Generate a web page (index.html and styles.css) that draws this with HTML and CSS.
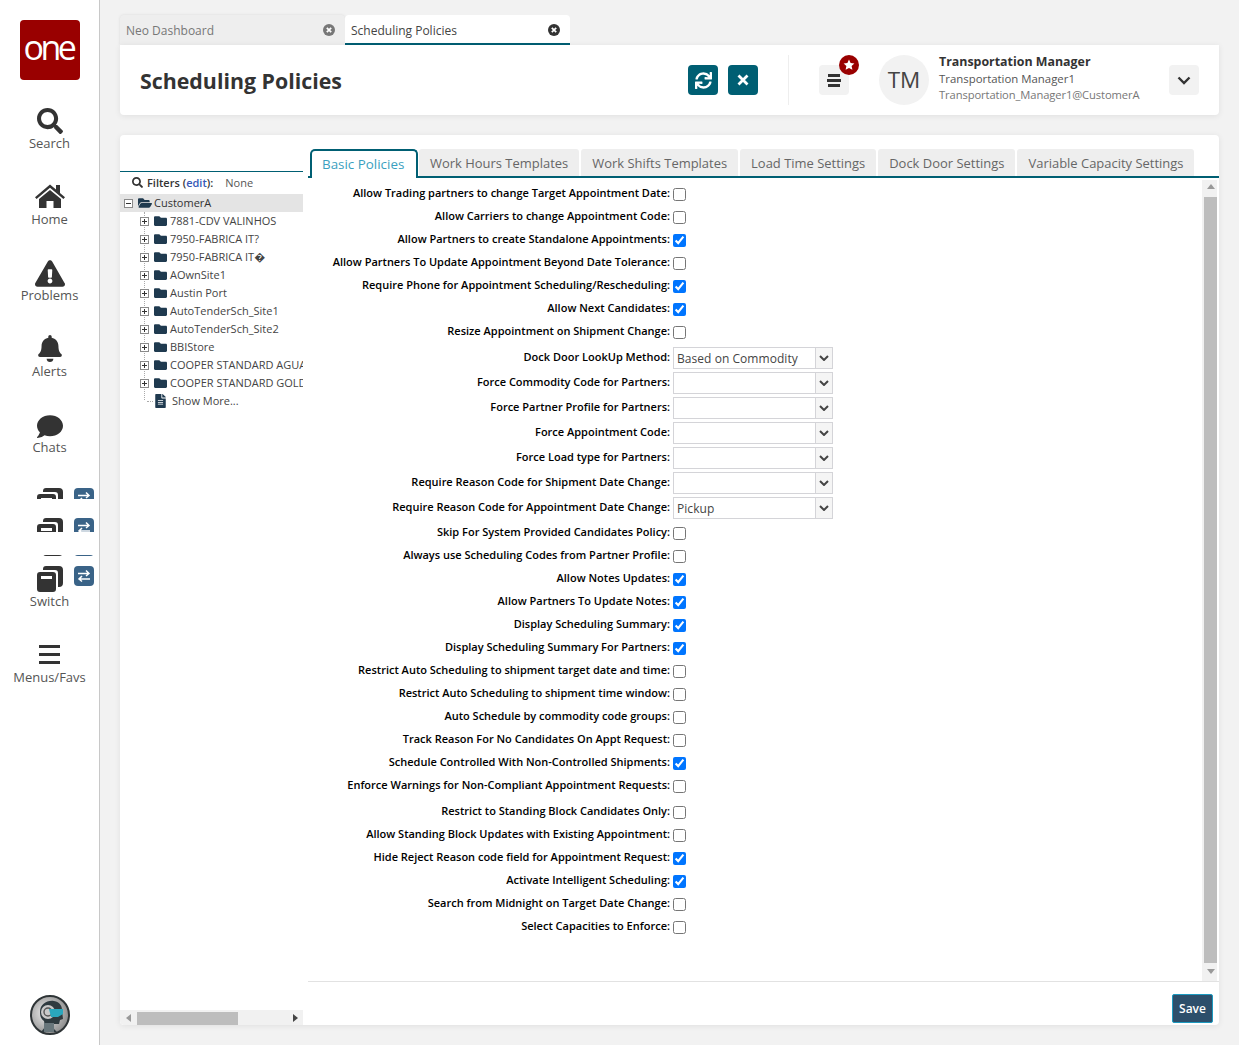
FILE: index.html
```html
<!DOCTYPE html>
<html lang="en">
<head>
<meta charset="utf-8">
<title>Scheduling Policies</title>
<link rel="stylesheet" href="styles.css">
</head>
<body>
<svg class="defs" aria-hidden="true">
  <symbol id="i-search" viewBox="0 0 512 512"><path d="M505 442.7L405.3 343c-4.5-4.5-10.6-7-17-7H372c27.6-35.3 44-79.7 44-128C416 93.1 322.9 0 208 0S0 93.1 0 208s93.1 208 208 208c48.3 0 92.7-16.4 128-44v16.3c0 6.4 2.5 12.5 7 17l99.7 99.7c9.4 9.4 24.6 9.4 33.9 0l28.3-28.3c9.4-9.4 9.4-24.6.1-34zM208 336c-70.7 0-128-57.2-128-128 0-70.7 57.2-128 128-128 70.7 0 128 57.2 128 128 0 70.7-57.2 128-128 128z"/></symbol>
  <symbol id="i-home" viewBox="0 0 30 24"><path d="M15 0.5 L21 5.6 V1 H25 V9 L30 13.2 L28.4 15 L15 3.8 L1.6 15 L0 13.2 Z"/><path d="M15 6 L26 15 V24 H18.5 V17 H11.5 V24 H4 V15 Z"/></symbol>
  <symbol id="i-warn" viewBox="0 0 576 512"><path d="M569.517 440.013C587.975 472.007 564.806 512 527.94 512H48.054c-36.937 0-59.999-40.055-41.577-71.987L246.423 24.035c18.467-32.009 64.72-31.951 83.154 0l239.94 416.978zM288 354c-25.405 0-46 20.595-46 46s20.595 46 46 46 46-20.595 46-46-20.595-46-46-46zm-43.673-165.346l7.418 136c.347 6.364 5.609 11.346 11.982 11.346h48.546c6.373 0 11.635-4.982 11.982-11.346l7.418-136c.375-6.874-5.098-12.654-11.982-12.654h-63.383c-6.884 0-12.356 5.78-11.981 12.654z"/></symbol>
  <symbol id="i-bell" viewBox="0 0 448 512"><path d="M224 512c35.32 0 63.97-28.65 63.97-64H160.03c0 35.35 28.65 64 63.97 64zm215.39-149.71c-19.32-20.76-55.47-51.99-55.47-154.29 0-77.7-54.48-139.9-127.94-155.16V32c0-17.67-14.32-32-31.98-32s-31.98 14.33-31.98 32v20.84C118.56 68.1 64.08 130.3 64.08 208c0 102.3-36.15 133.53-55.47 154.29-6 6.45-8.66 14.16-8.61 21.71.11 16.4 12.98 32 32.1 32h383.8c19.12 0 32-15.6 32.1-32 .05-7.55-2.61-15.27-8.61-21.71z"/></symbol>
  <symbol id="i-chat" viewBox="0 32 512 448"><path d="M256 32C114.6 32 0 125.1 0 240c0 49.6 21.4 95 57 130.7C44.5 421.1 2.7 466 2.2 466.5c-2.2 2.3-2.8 5.7-1.5 8.7S4.8 480 8 480c66.3 0 116-31.8 140.6-51.4 32.7 12.3 69 19.4 107.4 19.4 141.4 0 256-93.1 256-208S397.4 32 256 32z"/></symbol>
  <symbol id="i-stack" viewBox="0 0 26 26"><path d="M9 0H22A4 4 0 0 1 26 4V17A4 4 0 0 1 22 21H21V7A3 3 0 0 0 18 4H6V3A3 3 0 0 1 9 0Z"/><path fill-rule="evenodd" d="M3 6H16A3 3 0 0 1 19 9V23A3 3 0 0 1 16 26H3A3 3 0 0 1 0 23V9A3 3 0 0 1 3 6ZM4 10V13H15V10Z"/></symbol>
  <symbol id="i-sync" viewBox="0 0 512 512"><path d="M440.65 12.57l4 82.77A247.16 247.16 0 0 0 255.83 8C134.73 8 33.91 94.92 12.29 209.82A12 12 0 0 0 24.09 224h49.05a12 12 0 0 0 11.67-9.26 175.91 175.91 0 0 1 317-56.94l-101.46-4.86a12 12 0 0 0-12.57 12v47.41a12 12 0 0 0 12 12H500a12 12 0 0 0 12-12V12a12 12 0 0 0-12-12h-47.37a12 12 0 0 0-11.98 12.57zM255.83 432a175.61 175.61 0 0 1-146-77.8l101.8 4.87a12 12 0 0 0 12.57-12v-47.4a12 12 0 0 0-12-12H12a12 12 0 0 0-12 12V500a12 12 0 0 0 12 12h47.35a12 12 0 0 0 12-12.6l-4.15-82.57A247.17 247.17 0 0 0 255.83 504c121.11 0 221.93-86.92 243.55-201.82a12 12 0 0 0-11.8-14.18h-49.05a12 12 0 0 0-11.67 9.26A175.86 175.86 0 0 1 255.83 432z"/></symbol>
  <symbol id="i-folder" viewBox="0 64 512 384"><path d="M464 128H272l-64-64H48C21.49 64 0 85.49 0 112v288c0 26.51 21.49 48 48 48h416c26.51 0 48-21.49 48-48V176c0-26.51-21.49-48-48-48z"/></symbol>
  <symbol id="i-folder-open" viewBox="0 64 576 384"><path d="M572.694 292.093L500.27 416.248A63.997 63.997 0 0 1 444.989 448H45.025c-18.523 0-30.064-20.093-20.731-36.093l72.424-124.155A64 64 0 0 1 152 256h399.964c18.523 0 30.064 20.093 20.73 36.093zM152 224h328v-48c0-26.51-21.49-48-48-48H272l-64-64H48C21.49 64 0 85.49 0 112v278.046l69.077-118.418C86.214 242.25 117.989 224 152 224z"/></symbol>
  <symbol id="i-file" viewBox="0 0 384 512"><path d="M224 136V0H24C10.7 0 0 10.7 0 24v464c0 13.3 10.7 24 24 24h336c13.3 0 24-10.7 24-24V160H248c-13.2 0-24-10.8-24-24zm64 236c0 6.6-5.4 12-12 12H108c-6.6 0-12-5.4-12-12v-8c0-6.6 5.4-12 12-12h168c6.6 0 12 5.4 12 12v8zm0-64c0 6.6-5.4 12-12 12H108c-6.6 0-12-5.4-12-12v-8c0-6.6 5.4-12 12-12h168c6.6 0 12 5.4 12 12v8zm0-72v8c0 6.6-5.4 12-12 12H108c-6.6 0-12-5.4-12-12v-8c0-6.6 5.4-12 12-12h168c6.6 0 12 5.4 12 12zm96-114.1v6.1H256V0h6.1c6.4 0 12.5 2.5 17 7l97.9 98c4.5 4.5 7 10.6 7 16.9z"/></symbol>
  <symbol id="i-plus" viewBox="0 0 9 9"><rect x=".5" y=".5" width="8" height="8" fill="#fff" stroke="#8a8a8a"/><path d="M2 4.5H7M4.5 2V7" stroke="#333" fill="none"/></symbol>
  <symbol id="i-minus" viewBox="0 0 9 9"><rect x=".5" y=".5" width="8" height="8" fill="#fff" stroke="#8a8a8a"/><path d="M2 4.5H7" stroke="#333" fill="none"/></symbol>
  <symbol id="i-caret" viewBox="0 0 10 6"><path d="M1 1L5 5L9 1" fill="none" stroke="#444" stroke-width="2"/></symbol>
  <symbol id="i-close" viewBox="0 0 12 12"><circle cx="6" cy="6" r="6"/><path d="M3.8 3.8L8.2 8.2M8.2 3.8L3.8 8.2" stroke="#fff" stroke-width="1.7"/></symbol>
</svg>

<div class="app">
  <nav class="sidebar">
    <div class="logo">one</div>
    <a class="nav-item"><span class="nav-icon"><svg class="ic-search"><use href="#i-search"/></svg></span><span class="nav-label">Search</span></a>
    <a class="nav-item"><span class="nav-icon"><svg class="ic-home"><use href="#i-home"/></svg></span><span class="nav-label">Home</span></a>
    <a class="nav-item"><span class="nav-icon"><svg class="ic-warn"><use href="#i-warn"/></svg></span><span class="nav-label">Problems</span></a>
    <a class="nav-item"><span class="nav-icon"><svg class="ic-bell"><use href="#i-bell"/></svg></span><span class="nav-label">Alerts</span></a>
    <a class="nav-item"><span class="nav-icon"><svg class="ic-chat"><use href="#i-chat"/></svg></span><span class="nav-label">Chats</span></a>
    <div class="switch-clip clip-a"><svg class="ic-stack"><use href="#i-stack"/></svg><span class="swap"><svg viewBox="0 0 20 20"><path d="M4 7.5H15M12 4.5L15 7.5L12 10M16 13H5M8 10L5 13L8 15.5"/></svg></span></div>
    <div class="switch-clip clip-b"><svg class="ic-stack"><use href="#i-stack"/></svg><span class="swap"><svg viewBox="0 0 20 20"><path d="M4 7.5H15M12 4.5L15 7.5L12 10M16 13H5M8 10L5 13L8 15.5"/></svg></span></div>
    <div class="switch-clip clip-c"><svg class="ic-stack"><use href="#i-stack"/></svg><span class="swap"><svg viewBox="0 0 20 20"><path d="M4 7.5H15M12 4.5L15 7.5L12 10M16 13H5M8 10L5 13L8 15.5"/></svg></span></div>
    <div class="switch-clip clip-d"><svg class="ic-stack"><use href="#i-stack"/></svg><span class="swap"><svg viewBox="0 0 20 20"><path d="M4 7.5H15M12 4.5L15 7.5L12 10M16 13H5M8 10L5 13L8 15.5"/></svg></span></div>
    <span class="nav-label switch-label">Switch</span>
    <a class="nav-item menus"><span class="nav-icon"><span class="burger"><i></i><i></i><i></i></span></span><span class="nav-label">Menus/Favs</span></a>
    <div class="robot">
      <svg viewBox="0 0 40 40" width="40" height="40">
        <defs><radialGradient id="rg" cx="40%" cy="45%" r="60%"><stop offset="0" stop-color="#f0f0f0"/><stop offset="1" stop-color="#8c8c8c"/></radialGradient></defs>
        <circle cx="20" cy="20" r="19" fill="url(#rg)" stroke="#2e3436" stroke-width="2"/>
        <path d="M10 17C10 9 17 5 24 6C30 7 32 11 32 15L33 24L30 25L29 29H24L23 33L27 37H11L15 32L14 26C11 24 10 21 10 17Z" fill="#2f3b40"/>
        <circle cx="18" cy="17" r="7" fill="#c9c9c9"/>
        <circle cx="18" cy="17" r="4" fill="none" stroke="#555" stroke-width="1.4"/>
        <path d="M19 14H33V19L28 22H21Z" fill="#2aa7bd"/>
        <path d="M14 28H24V37H14Z" fill="#68767b"/>
      </svg>
    </div>
  </nav>

  <main class="content">
    <div class="page-tabs">
      <div class="page-tab inactive"><span>Neo Dashboard</span><svg class="tab-x"><use href="#i-close"/></svg></div>
      <div class="page-tab active"><span>Scheduling Policies</span><svg class="tab-x"><use href="#i-close"/></svg></div>
    </div>

    <header class="header card">
      <h1>Scheduling Policies</h1>
      <div class="header-actions">
        <button class="btn-teal"><svg class="ic-sync"><use href="#i-sync"/></svg></button>
        <button class="btn-teal"><svg class="ic-x" viewBox="0 0 12 12"><path d="M1.5 1.5L10.5 10.5M10.5 1.5L1.5 10.5"/></svg></button>
      </div>
      <div class="divider"></div>
      <div class="menu-btn">
        <span class="lines"><i></i><i></i><i></i></span>
        <span class="star-badge"><svg viewBox="0 0 12 12" width="12" height="12"><path d="M6 .6L7.6 4.1L11.4 4.5L8.6 7L9.4 10.8L6 8.9L2.6 10.8L3.4 7L.6 4.5L4.4 4.1Z"/></svg></span>
      </div>
      <div class="avatar">TM</div>
      <div class="user">
        <div class="user-name">Transportation Manager</div>
        <div class="user-role">Transportation Manager1</div>
        <div class="user-mail">Transportation_Manager1@CustomerA</div>
      </div>
      <button class="chev-btn"><svg viewBox="0 0 14 9" width="14" height="9"><path d="M1.5 1.5L7 7L12.5 1.5"/></svg></button>
    </header>

    <section class="main card">
      <aside class="tree-pane">
        <div class="tree-body">
          <div class="filters"><svg class="ic-filter"><use href="#i-search"/></svg><b>Filters (<span class="edit">edit</span>):</b><span class="none">None</span></div>
          <div class="tree-root"><svg class="exp"><use href="#i-minus"/></svg><svg class="fo"><use href="#i-folder-open"/></svg><span>CustomerA</span></div>
          <ul class="tree">
            <li><svg class="exp"><use href="#i-plus"/></svg><svg class="fc"><use href="#i-folder"/></svg><span>7881-CDV VALINHOS</span></li>
            <li><svg class="exp"><use href="#i-plus"/></svg><svg class="fc"><use href="#i-folder"/></svg><span>7950-FABRICA IT?</span></li>
            <li><svg class="exp"><use href="#i-plus"/></svg><svg class="fc"><use href="#i-folder"/></svg><span>7950-FABRICA IT�</span></li>
            <li><svg class="exp"><use href="#i-plus"/></svg><svg class="fc"><use href="#i-folder"/></svg><span>AOwnSite1</span></li>
            <li><svg class="exp"><use href="#i-plus"/></svg><svg class="fc"><use href="#i-folder"/></svg><span>Austin Port</span></li>
            <li><svg class="exp"><use href="#i-plus"/></svg><svg class="fc"><use href="#i-folder"/></svg><span>AutoTenderSch_Site1</span></li>
            <li><svg class="exp"><use href="#i-plus"/></svg><svg class="fc"><use href="#i-folder"/></svg><span>AutoTenderSch_Site2</span></li>
            <li><svg class="exp"><use href="#i-plus"/></svg><svg class="fc"><use href="#i-folder"/></svg><span>BBIStore</span></li>
            <li><svg class="exp"><use href="#i-plus"/></svg><svg class="fc"><use href="#i-folder"/></svg><span>COOPER STANDARD AGUASCALIENTES</span></li>
            <li><svg class="exp"><use href="#i-plus"/></svg><svg class="fc"><use href="#i-folder"/></svg><span>COOPER STANDARD GOLDSBORO</span></li>
            <li class="more"><i class="dash"></i><svg class="ff"><use href="#i-file"/></svg><span>Show More...</span></li>
          </ul>
        </div>
        <div class="hscroll">
          <i class="arrow-l"></i>
          <i class="hthumb"></i>
          <i class="arrow-r"></i>
        </div>
      </aside>

      <div class="policies">
        <div class="tabs">
          <div class="tab current">Basic Policies</div>
          <div class="tab">Work Hours Templates</div>
          <div class="tab">Work Shifts Templates</div>
          <div class="tab">Load Time Settings</div>
          <div class="tab">Dock Door Settings</div>
          <div class="tab">Variable Capacity Settings</div>
        </div>
        <div class="form-area">
          <div class="form">
            <label class="row"><span>Allow Trading partners to change Target Appointment Date:</span><input type="checkbox"></label>
            <label class="row"><span>Allow Carriers to change Appointment Code:</span><input type="checkbox"></label>
            <label class="row"><span>Allow Partners to create Standalone Appointments:</span><input type="checkbox" checked></label>
            <label class="row"><span>Allow Partners To Update Appointment Beyond Date Tolerance:</span><input type="checkbox"></label>
            <label class="row"><span>Require Phone for Appointment Scheduling/Rescheduling:</span><input type="checkbox" checked></label>
            <label class="row"><span>Allow Next Candidates:</span><input type="checkbox" checked></label>
            <label class="row"><span>Resize Appointment on Shipment Change:</span><input type="checkbox"></label>

            <div class="row sel first-sel"><span>Dock Door LookUp Method:</span><div class="select"><span>Based on Commodity</span><i><svg><use href="#i-caret"/></svg></i></div></div>
            <div class="row sel"><span>Force Commodity Code for Partners:</span><div class="select"><span></span><i><svg><use href="#i-caret"/></svg></i></div></div>
            <div class="row sel"><span>Force Partner Profile for Partners:</span><div class="select"><span></span><i><svg><use href="#i-caret"/></svg></i></div></div>
            <div class="row sel"><span>Force Appointment Code:</span><div class="select"><span></span><i><svg><use href="#i-caret"/></svg></i></div></div>
            <div class="row sel"><span>Force Load type for Partners:</span><div class="select"><span></span><i><svg><use href="#i-caret"/></svg></i></div></div>
            <div class="row sel"><span>Require Reason Code for Shipment Date Change:</span><div class="select"><span></span><i><svg><use href="#i-caret"/></svg></i></div></div>
            <div class="row sel last-sel"><span>Require Reason Code for Appointment Date Change:</span><div class="select"><span>Pickup</span><i><svg><use href="#i-caret"/></svg></i></div></div>

            <label class="row"><span>Skip For System Provided Candidates Policy:</span><input type="checkbox"></label>
            <label class="row"><span>Always use Scheduling Codes from Partner Profile:</span><input type="checkbox"></label>
            <label class="row"><span>Allow Notes Updates:</span><input type="checkbox" checked></label>
            <label class="row"><span>Allow Partners To Update Notes:</span><input type="checkbox" checked></label>
            <label class="row"><span>Display Scheduling Summary:</span><input type="checkbox" checked></label>
            <label class="row"><span>Display Scheduling Summary For Partners:</span><input type="checkbox" checked></label>
            <label class="row"><span>Restrict Auto Scheduling to shipment target date and time:</span><input type="checkbox"></label>
            <label class="row"><span>Restrict Auto Scheduling to shipment time window:</span><input type="checkbox"></label>
            <label class="row"><span>Auto Schedule by commodity code groups:</span><input type="checkbox"></label>
            <label class="row"><span>Track Reason For No Candidates On Appt Request:</span><input type="checkbox"></label>
            <label class="row"><span>Schedule Controlled With Non-Controlled Shipments:</span><input type="checkbox" checked></label>
            <label class="row"><span>Enforce Warnings for Non-Compliant Appointment Requests:</span><input type="checkbox"></label>
            <label class="row gap-top"><span>Restrict to Standing Block Candidates Only:</span><input type="checkbox"></label>
            <label class="row"><span>Allow Standing Block Updates with Existing Appointment:</span><input type="checkbox"></label>
            <label class="row"><span>Hide Reject Reason code field for Appointment Request:</span><input type="checkbox" checked></label>
            <label class="row"><span>Activate Intelligent Scheduling:</span><input type="checkbox" checked></label>
            <label class="row"><span>Search from Midnight on Target Date Change:</span><input type="checkbox"></label>
            <label class="row"><span>Select Capacities to Enforce:</span><input type="checkbox"></label>
          </div>
          <div class="vscroll"><i class="arrow-u"></i><i class="vthumb"></i><i class="arrow-d"></i></div>
        </div>
        <div class="footer"><button class="save">Save</button></div>
      </div>
    </section>
  </main>
</div>
</body>
</html>
```
FILE: styles.css
```css
* { box-sizing: border-box; }
html, body { margin: 0; height: 100%; }
body { font-family: "Open Sans", "Liberation Sans", sans-serif; background: #f2f2f2; color: #333; overflow: hidden; }
.defs { width: 0; height: 0; position: absolute; }
.app { display: flex; height: 1045px; }

/* Sidebar */
.sidebar { width: 100px; flex: none; background: #fff; border-right: 1px solid #c8c8c8; display: flex; flex-direction: column; align-items: stretch; padding-top: 20px; }
.logo { width: 60px; height: 60px; margin: 0 0 25px 20px; background: #990000; border-radius: 4px; color: #fff; font-family: "Open Sans", sans-serif; font-weight: 400; font-size: 34px; letter-spacing: -3.5px; line-height: 54px; text-align: center; padding-right: 3px; }
.nav-item { display: flex; flex-direction: column; align-items: center; margin-bottom: 30px; }
.nav-icon { height: 30px; display: flex; align-items: center; justify-content: center; }
.nav-icon svg { fill: #333; display: block; }
.nav-label { font-size: 13px; line-height: 16px; color: #555; text-align: center; display: block; }
.ic-search { width: 26px; height: 26px; margin-top: 2px; }
.ic-home { width: 30px; height: 24px; margin-top: -1px; }
.ic-warn { width: 30px; height: 27px; margin-top: 3px; }
.ic-bell { width: 24px; height: 27px; }
.ic-chat { width: 26px; height: 23px; margin-top: 5px; }
.switch-clip { display: flex; overflow: hidden; padding-left: 37px; flex: none; }
.clip-a { height: 11px; margin-top: 3px; }
.clip-b { height: 14px; margin-top: 19px; }
.clip-c { height: 1px; margin-top: 23px; }
.clip-d { height: 27px; margin-top: 10px; }
.ic-stack { width: 26px; height: 26px; fill: #333; flex: none; }
.swap { width: 20px; height: 20px; background: #3a6387; border-radius: 4px; margin-left: 11px; flex: none; display: block; }
.swap svg { width: 20px; height: 20px; display: block; fill: none; stroke: #fff; stroke-width: 1.5; }
.switch-label { margin-bottom: 30px; }
.burger { width: 21px; display: flex; flex-direction: column; gap: 5px; }
.burger i { height: 3px; background: #333; display: block; }
.robot { margin-top: auto; margin-bottom: 10px; align-self: center; margin-left: 1px; height: 40px; }
.robot svg { display: block; }

/* Content */
.content { flex: 1; padding: 15px 20px 20px 20px; display: flex; flex-direction: column; min-width: 0; }
.card { background: #fff; border-radius: 4px; box-shadow: 0 1px 6px rgba(0,0,0,.08); }
.page-tabs { display: flex; height: 30px; flex: none; position: relative; }
.page-tab { width: 225px; height: 30px; display: flex; align-items: center; justify-content: space-between; padding: 0 10px 0 6px; font-size: 12px; border-radius: 4px 4px 0 0; }
.page-tab.inactive { background: #eee; color: #777; box-shadow: 0 0 3px rgba(0,0,0,.1); }
.page-tab.active { background: #fff; color: #444; border-bottom: 2px solid #005f73; padding-top: 2px; }
.tab-x { width: 12px; height: 12px; }
.inactive .tab-x { fill: #777; }
.active .tab-x { fill: #333; }

.header { height: 70px; flex: none; display: flex; align-items: center; padding-left: 20px; border-radius: 0 0 4px 4px; position: relative; }
h1 { margin: 0; font-size: 21.35px; font-weight: 700; color: #333; flex: none; width: 548px; line-height: 30px; position: relative; top: .5px; }
.header-actions { display: flex; gap: 10px; flex: none; }
.btn-teal { width: 30px; height: 30px; border: 0; border-radius: 4px; background: #005f73; padding: 0; display: flex; align-items: center; justify-content: center; }
.ic-sync { width: 17px; height: 17px; fill: #fff; }
.ic-x { width: 12px; height: 12px; fill: none; stroke: #fff; stroke-width: 2.8; }
.divider { width: 1px; height: 50px; background: #eee; margin: 0 30px; flex: none; }
.menu-btn { width: 30px; height: 30px; background: #f2f2f2; border-radius: 4px; position: relative; flex: none; display: flex; align-items: center; justify-content: center; }
.lines { width: 14px; display: flex; flex-direction: column; gap: 2px; align-items: center; }
.lines i { display: block; height: 3px; width: 14px; background: #333; }
.lines i:first-child { width: 12px; }
.lines i:last-child { width: 12px; }
.star-badge { position: absolute; right: -10px; top: -10px; width: 20px; height: 20px; border-radius: 50%; background: #990000; display: flex; align-items: center; justify-content: center; }
.star-badge svg { fill: #fff; }
.avatar { width: 50px; height: 50px; border-radius: 50%; background: #f2f2f2; margin-left: 30px; flex: none; font-size: 22.5px; line-height: 50px; text-align: center; color: #444; }
.user { width: 230px; margin-left: 10px; flex: none; margin-top: -3px; }
.user-name { font-size: 12.4px; font-weight: 700; line-height: 16px; color: #333; margin-bottom: 1px; }
.user-role { font-size: 11.4px; line-height: 16px; color: #555; }
.user-mail { font-size: 11.2px; line-height: 16px; color: #777; letter-spacing: -.1px; }
.chev-btn { width: 30px; height: 30px; border: 0; border-radius: 4px; background: #f2f2f2; padding: 0; display: flex; align-items: center; justify-content: center; }
.chev-btn svg { fill: none; stroke: #333; stroke-width: 2.4; }

/* Main card */
.main { margin-top: 20px; flex: 1; display: flex; min-height: 0; overflow: hidden; }
.tree-pane { width: 183px; flex: none; display: flex; flex-direction: column; margin-right: 5px; }
.tree-body { flex: 1; margin-top: 36px; border-top: 1px solid #005f73; overflow: hidden; min-height: 0; }
.filters { height: 22px; display: flex; align-items: center; padding: 0 0 2px 12px; font-size: 11px; white-space: nowrap; }
.filters b { color: #333; font-weight: 600; margin-left: 4px; }
.edit { color: #3557b7; }
.none { margin-left: 12px; color: #555; }
.ic-filter { width: 11px; height: 11px; fill: #333; }
.tree-root { height: 18px; background: #e4e4e4; display: flex; align-items: center; padding-left: 4px; font-size: 11px; }
.tree-root span, .tree li span { white-space: nowrap; margin-top: -2px; }
.exp { width: 9px; height: 9px; flex: none; }
.fo { width: 14px; height: 10px; fill: #1f3a4f; margin: 0 2px 0 5px; flex: none; }
.tree { list-style: none; margin: 0 0 0 24px; padding: 0; border-left: 1px dotted #aaa; height: 188px; }
.tree li { height: 18px; display: flex; align-items: center; font-size: 11px; color: #444; margin-left: -5px; white-space: nowrap; }
.fc { width: 13px; height: 10px; fill: #1f3a4f; margin: 0 3px 0 5px; flex: none; }
.tree .more { margin-left: 2px; }
.dash { display: block; width: 6px; border-top: 1px dotted #aaa; flex: none; }
.ff { width: 11px; height: 14px; fill: #1f3a4f; margin: 0 6px 0 2px; flex: none; }
.hscroll { height: 15px; background: #f1f1f1; flex: none; display: flex; align-items: center; position: relative; border-radius: 0 0 0 4px; }
.hthumb { display: block; width: 101px; height: 13px; background: #bdbdbd; margin: 2px 0 0 6px; }
.arrow-l { width: 0; height: 0; margin-left: 6px; border: 4px solid transparent; border-left: 0; border-right: 5px solid #999; }
.arrow-r { width: 0; height: 0; margin-left: auto; margin-right: 5px; border: 4px solid transparent; border-right: 0; border-left: 5px solid #444; }

.policies { flex: 1; display: flex; flex-direction: column; min-width: 0; }
.tabs { height: 43px; flex: none; padding: 14px 0 0 2px; display: flex; border-bottom: 2px solid #005f73; }
.tab { height: 27px; background: #eee; font-size: 12.96px; color: #666; line-height: 28px; padding: 0 11px; margin-right: 2px; border-radius: 3px 3px 0 0; white-space: nowrap; }
.tab.current { height: 29px; width: 108px; margin-bottom: -2px; background: #fff; color: #3a9fc0; border: 2px solid #005f73; border-bottom: 0; line-height: 26px; padding: 0 10px; border-radius: 5px 5px 0 0; margin-right: 1px; font-size: 13.4px; }
.form-area { flex: 1; display: flex; min-height: 0; border-bottom: 1px solid #e2e2e2; padding-top: 3px; }
.form { width: 894px; flex: none; overflow: hidden; padding-top: 1px; }
.row { display: flex; align-items: center; height: 23px; }
.row > span { width: 362px; flex: none; text-align: right; font-size: 11px; font-weight: 600; color: #000; white-space: nowrap; position: relative; top: -1px; }
.row input { width: 13px; height: 13px; margin: 0 0 0 3px; flex: none; position: relative; top: 1px; }
.sel { height: 25px; }
.first-sel { margin-top: 2px; }
.last-sel { margin-bottom: 1px; }
.gap-top { margin-top: 3px; }
.select { width: 160px; height: 22px; margin-left: 3px; border: 1px solid #d4d4d8; background: #fff; display: flex; align-items: center; justify-content: space-between; flex: none; position: relative; top: .5px; }
.select span { font-size: 12px; color: #444; padding-left: 3px; letter-spacing: .05px; }
.select i { width: 17px; height: 20px; border-left: 1px solid #d4d4d8; background: #f5f5f5; display: flex; align-items: center; justify-content: center; }
.select svg { width: 10px; height: 6px; display: block; }
.vscroll { width: 15px; padding-left: 2px; margin-top: -1px; flex: none; background: #f1f1f1; display: flex; flex-direction: column; align-items: center; }
.vthumb { display: block; width: 13px; height: 766px; background: #bdbdbd; margin-top: 8px; }
.arrow-u { width: 0; height: 0; margin-top: 4px; border: 4px solid transparent; border-top: 0; border-bottom: 5px solid #999; }
.arrow-d { width: 0; height: 0; margin-top: 6px; border: 4px solid transparent; border-bottom: 0; border-top: 5px solid #999; }
.footer { height: 43px; flex: none; display: flex; justify-content: flex-end; align-items: flex-start; padding: 12px 6px 0 0; }
.save { width: 41px; height: 29px; background: #2d4f6b; border: 1px solid #1c9ac0; border-radius: 2px; color: #fff; font-family: "Open Sans", sans-serif; font-size: 12px; font-weight: 600; padding: 0; }
```
